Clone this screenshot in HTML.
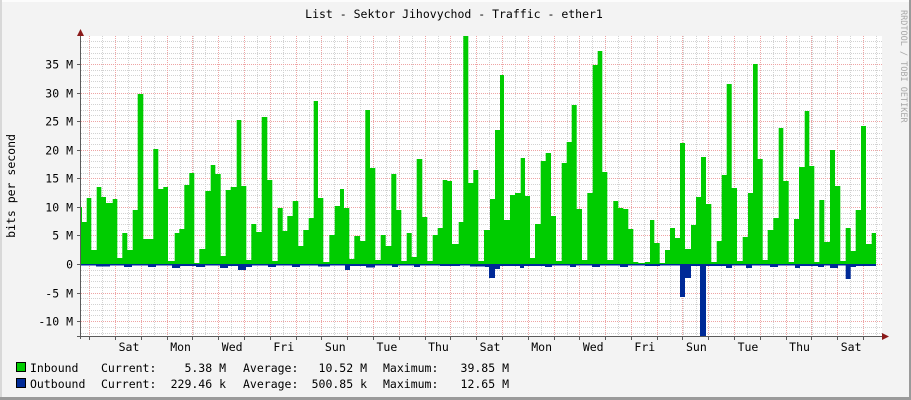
<!DOCTYPE html>
<html><head><meta charset="utf-8"><style>
html,body{margin:0;padding:0;background:#f3f3f3;}
svg{display:block;}
text{font-family:"DejaVu Sans Mono","Liberation Mono",monospace;font-size:11.5px;fill:#000;}
</style></head><body>
<svg width="911" height="400" viewBox="0 0 911 400" xmlns="http://www.w3.org/2000/svg">
<rect x="0" y="0" width="911" height="400" fill="#f3f3f3"/>
<rect x="0" y="0" width="911" height="2" fill="#fcfcfc"/>
<rect x="0" y="0" width="2" height="400" fill="#d8d8d8"/>
<rect x="909" y="0" width="2" height="400" fill="#9a9a9a"/>
<rect x="0" y="397" width="911" height="3" fill="#9a9a9a"/>
<rect x="81" y="36" width="801" height="300" fill="#ffffff"/>
<g id="grid"></g>
<path fill="#00cc00" d="M81 264 V207 H82 V222 H86.7 V198 H91.3 V250 H96.7 V187 H101.3 V197 H106 V203 H112.7 V199 H117.3 V258 H122.3 V233 H127.3 V250 H132.7 V210 H137.7 V94 H143.3 V239 H153.3 V149 H158.3 V189 H163.3 V187 H168 V261 H174.7 V233 H179.3 V229 H184.3 V185 H189.3 V173 H194.3 V263 H199.3 V249 H205.3 V191 H210.7 V165 H215.3 V174 H220.7 V256 H225.7 V190 H230.7 V187 H236.7 V120 H241.3 V186 H246.3 V260 H251.3 V224 H256.3 V232 H261.7 V117 H267.3 V180 H272.3 V261 H277.7 V208 H282.7 V231 H287.3 V216 H292.7 V201 H298.3 V246 H303.3 V230 H308.7 V218 H313.7 V101 H318 V198 H323.3 V262 H329.3 V235 H334.7 V206 H340 V189 H344 V208 H349.3 V259 H354.3 V236 H360 V241 H365.3 V110 H370 V168 H375.3 V260 H380.7 V235 H385.7 V246 H391.3 V174 H396.3 V210 H401.3 V261 H406.7 V233 H411.7 V257 H416.7 V159 H422.3 V217 H427.3 V261 H432.7 V235 H437.7 V228 H442.7 V180 H447.3 V181 H452 V244 H458.7 V222 H463.3 V36 H468.3 V183 H473.3 V170 H478.3 V261 H484 V230 H490 V199 H495 V130 H500 V75 H504 V220 H510 V195 H515 V193 H520.7 V158 H525 V196 H530 V258 H535 V224 H540.7 V161 H545.7 V153 H551 V216 H556 V261 H561.7 V163 H566.7 V142 H571.7 V105 H576.7 V209 H582 V260 H587.3 V193 H592.7 V65 H597.7 V51 H602.3 V172 H607.3 V260 H613.3 V201 H618.3 V208 H623.3 V209 H628.3 V229 H633.3 V262 H638.3 V263 H645 V262 H650 V220 H654.3 V243 H659.7 V263 H665 V250 H670 V228 H675 V238 H680 V143 H685 V249 H691 V225 H696 V197 H701 V157 H706 V204 H711.3 V262 H716.7 V241 H721.7 V175 H726.7 V84 H731.7 V188 H737 V261 H742.7 V237 H748 V193 H753 V64 H757.7 V159 H762.7 V260 H767.7 V230 H773.3 V218 H778.7 V128 H783.3 V181 H788.7 V262 H794 V219 H799 V167 H804.7 V111 H809.3 V166 H814.3 V262 H819.3 V200 H824.3 V242 H830 V150 H835 V186 H840.3 V261 H845.7 V228 H850.7 V251 H855.7 V210 H861 V126 H866 V244 H871.7 V233 H876 V264 Z"/>
<path fill="#002a97" d="M81 264 V265.5 H96 V266.5 H110 V265.5 H124 V267 H132 V265.5 H148 V267 H156 V265.5 H172 V268 H180 V266 H196 V267 H205 V265.5 H220 V268 H228 V266 H238 V270 H246 V267 H252 V265.5 H268 V267 H276 V265.5 H292 V267 H300 V265.5 H318 V266.5 H330 V265.5 H345 V270 H350 V266 H366 V267.5 H375 V265.5 H392 V267 H398 V265.5 H414 V267 H420 V265.5 H440 V266 H460 V265.5 H470 V266.5 H485 V267 H489 V278 H495 V269 H500 V266 H520 V268 H524 V266 H545 V267 H552 V265.5 H570 V267 H576 V265.5 H592 V267 H600 V265.5 H620 V267 H628 V265.5 H645 V266 H660 V265.5 H680 V297 H685 V278 H691 V266 H700 V336 H706 V266 H716 V266 H726 V268 H732 V265.5 H746 V268 H752 V265.5 H770 V267 H778 V265.5 H795 V268 H800 V266 H818 V267 H824 V265.5 H830 V268 H838 V265.5 H845.7 V279 H850.7 V267 H856 V266 H876 V264 Z"/>
<line x1="80.5" y1="30" x2="80.5" y2="339" stroke="#5a5a5a" stroke-width="1"/>
<line x1="77" y1="336.5" x2="884" y2="336.5" stroke="#5a5a5a" stroke-width="1"/>
<polygon points="77,36 84,36 80.5,29" fill="#8b1a1a"/>
<polygon points="882,333 882,340 889,336.5" fill="#8b1a1a"/>
<g id="lab"></g>
<text x="454" y="18" text-anchor="middle" font-size="12">List - Sektor Jihovychod - Traffic - ether1</text>
<text transform="translate(15,186) rotate(-90)" text-anchor="middle" font-size="12">bits per second</text>
<text transform="translate(901,10) rotate(90)" style="font-size:8.5px;fill:#a8a8a8">RRDTOOL / TOBI OETIKER</text>
<rect x="16.5" y="362.5" width="9" height="9" fill="#00cc00" stroke="#000"/>
<rect x="16.5" y="378.5" width="9" height="9" fill="#002a97" stroke="#000"/>
<text x="30" y="372">Inbound</text>
<text x="30" y="388">Outbound</text>
<text x="101" y="372">Current:</text>
<text x="101" y="388">Current:</text>
<text x="226" y="372" text-anchor="end">5.38 M</text>
<text x="226" y="388" text-anchor="end">229.46 k</text>
<text x="243" y="372">Average:</text>
<text x="243" y="388">Average:</text>
<text x="367" y="372" text-anchor="end">10.52 M</text>
<text x="367" y="388" text-anchor="end">500.85 k</text>
<text x="383" y="372">Maximum:</text>
<text x="383" y="388">Maximum:</text>
<text x="509" y="372" text-anchor="end">39.85 M</text>
<text x="509" y="388" text-anchor="end">12.65 M</text>
</svg>
<script>
(function(){
var ns="http://www.w3.org/2000/svg",g=document.getElementById("grid"),lab=document.getElementById("lab");
function L(x1,y1,x2,y2,c,par){var l=document.createElementNS(ns,"line");l.setAttribute("x1",x1);l.setAttribute("y1",y1);l.setAttribute("x2",x2);l.setAttribute("y2",y2);l.setAttribute("stroke",c);l.setAttribute("stroke-width","1");if(c!="#5a5a5a")l.setAttribute("stroke-dasharray","1,1");(par||g).appendChild(l);}
var s=200/35;
for(var k=-12;k<=39;k++){var y=Math.round(264-k*s)+0.5;if(k%5==0)continue;L(81,y,882,y,"#d2d2d2");}
for(var x=89.3-12.9;x<882;x+=12.9){if(x>81)L(Math.round(x)+0.5,36,Math.round(x)+0.5,336,"#d2d2d2");}
for(var x=89.3;x<882;x+=25.79){L(Math.round(x)+0.5,36,Math.round(x)+0.5,336,"#eea4a4");L(Math.round(x)+0.5,336,Math.round(x)+0.5,340,"#5a5a5a",lab);}
for(var k=-10;k<=35;k+=5){var y=Math.round(264-k*s)+0.5;L(81,y,882,y,"#eea4a4");L(77,y,81,y,"#5a5a5a",lab);
var t=document.createElementNS(ns,"text");t.setAttribute("x","73");t.setAttribute("y",y+4);t.setAttribute("text-anchor","end");t.textContent=k==0?"0":(k+" M");lab.appendChild(t);}
var d=["Sat","Mon","Wed","Fri","Sun","Tue","Thu","Sat","Mon","Wed","Fri","Sun","Tue","Thu","Sat"];
for(var i=0;i<d.length;i++){var t=document.createElementNS(ns,"text");t.setAttribute("x",129+i*51.58);t.setAttribute("y","351");t.setAttribute("text-anchor","middle");t.textContent=d[i];lab.appendChild(t);}
})();
</script>
</body></html>
